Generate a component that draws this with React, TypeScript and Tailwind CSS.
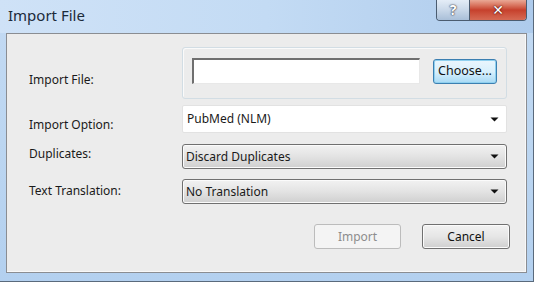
import React from "react";

const Arrow = () => (
  <svg width="9" height="5" viewBox="0 0 9 5" className="shrink-0">
    <path d="M0.5 0.5 H8.5 L4.5 4.5 Z" fill="#111" />
  </svg>
);

export default function App() {
  const font = { fontFamily: '"Noto Sans", "DejaVu Sans", sans-serif' };
  return (
    <div
      className="w-[534px] h-[282px] flex flex-col bg-gradient-to-b from-[#c3daf3] via-[#bcd6f1] to-[#b3d0ef] text-[12px] text-[#1a1a1a] overflow-hidden border-r border-[#5a6a7c]"
      style={font}
    >
      {/* title bar */}
      <div className="h-[33px] flex items-start justify-between pl-[8px] pr-[6px] bg-gradient-to-r from-[#cfe2f7] via-[#c3dbf4] to-[#aecbec]">
        <div className="pt-[5px] text-[15px] text-[#1b2a3a] leading-[20px]">Import File</div>
        <div className="flex h-[21px] border border-t-0 border-[#4b5c70] rounded-b-[4px] overflow-hidden">
          <div className="w-[33px] flex items-center justify-center bg-gradient-to-b from-[#e4edf7] via-[#c9d8e9] to-[#a9bfd8] border-r border-[#4b5c70] text-white font-bold text-[14px] leading-none [text-shadow:0_0_2px_#334,0_0_1px_#223]">
            ?
          </div>
          <div className="w-[56px] flex items-center justify-center bg-gradient-to-b from-[#e9a895] via-[#c6402c] to-[#d66a54] text-white font-bold text-[14px] leading-none [text-shadow:0_0_2px_#511,0_0_1px_#400]">
            ✕
          </div>
        </div>
      </div>

      {/* client panel */}
      <div className="ml-[6px] mr-[6px] h-[240px] bg-[#ececec] border border-[#8a8d92] shadow-[inset_-1px_-1px_0_#f8f8f8] flex flex-col pl-[22px] pr-[19px] pt-[13px]">
        {/* row 1 */}
        <div className="flex h-[52px]">
          <div className="w-[153px] pt-[24px]">Import File:</div>
          <div className="flex-1 flex items-start border border-[#d2dde4] rounded-[3px] shadow-[inset_1px_1px_0_#fafafa] pl-[9px] pr-[8px] pt-[10px] gap-[13px]">
            <div className="w-[228px] h-[26px] bg-white border-t-2 border-l-2 border-[#6f6f6f] border-r border-b border-r-[#e8e8e8] border-b-[#e8e8e8]" />
            <div className="w-[64px] h-[25px] mt-[1px] rounded-[3px] border border-[#3c7fb1] shadow-[inset_0_0_0_1px_#8fd0ef] bg-gradient-to-b from-[#eaf6fd] via-[#d9f0fc] to-[#a7d9f5] flex items-center justify-center text-[12.5px] text-[#111]">
              Choose...
            </div>
          </div>
        </div>

        {/* row 2 */}
        <div className="flex h-[28px] mt-[6px]">
          <div className="w-[153px] pt-[11px]">Import Option:</div>
          <div className="flex-1 bg-white border border-[#e2e2e2] rounded-[2px] flex items-center justify-between pl-[4px] pr-[7px]">
            <span>PubMed (NLM)</span>
            <Arrow />
          </div>
        </div>

        {/* row 3 */}
        <div className="flex h-[25px] mt-[11px]">
          <div className="w-[153px] pt-[1px]">Duplicates:</div>
          <div className="flex-1 rounded-[3px] border border-[#707070] bg-gradient-to-b from-[#f2f2f2] via-[#e3e3e3] to-[#cfcfcf] shadow-[inset_0_0_0_1px_#fbfbfb] flex items-center justify-between pl-[3px] pr-[7px]">
            <span>Discard Duplicates</span>
            <Arrow />
          </div>
        </div>

        {/* row 4 */}
        <div className="flex h-[25px] mt-[10px]">
          <div className="w-[153px] pt-[3px]">Text Translation:</div>
          <div className="flex-1 rounded-[3px] border border-[#707070] bg-gradient-to-b from-[#f2f2f2] via-[#e3e3e3] to-[#cfcfcf] shadow-[inset_0_0_0_1px_#fbfbfb] flex items-center justify-between pl-[3px] pr-[7px]">
            <span>No Translation</span>
            <Arrow />
          </div>
        </div>

        {/* buttons */}
        <div className="flex justify-end gap-[21px] mt-[20px] -mr-[3px]">
          <div className="w-[87px] h-[25px] rounded-[3px] border border-[#bcbcbc] bg-[#f4f4f4] flex items-center justify-center text-[#8d8d8d]">
            Import
          </div>
          <div className="w-[88px] h-[25px] rounded-[3px] border border-[#707070] shadow-[inset_0_0_0_1px_#fbfbfb] bg-gradient-to-b from-[#f2f2f2] via-[#e6e6e6] to-[#cfcfcf] flex items-center justify-center text-[#111]">
            Cancel
          </div>
        </div>
      </div>

      <div className="flex-1 border-b border-[#5a6a7c]" />
    </div>
  );
}
